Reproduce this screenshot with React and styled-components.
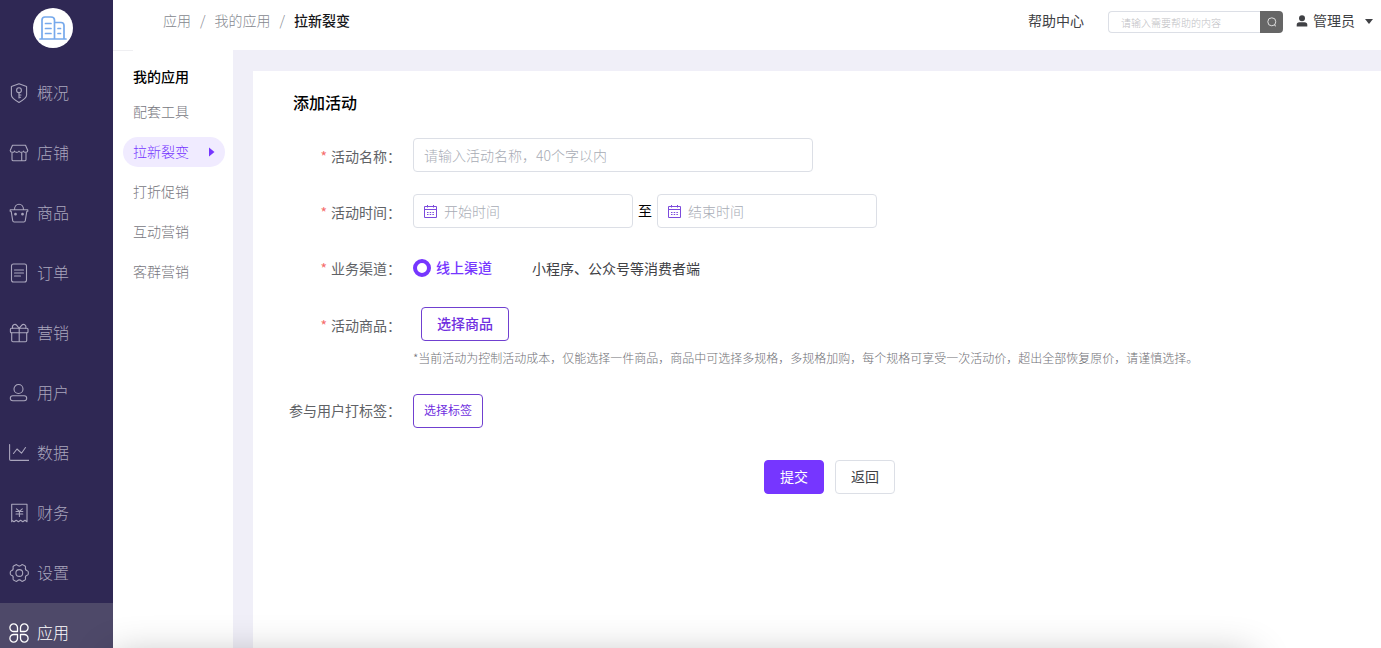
import React, { useState } from "react";
import styled, { createGlobalStyle } from "styled-components";

const GlobalStyle = createGlobalStyle`
    * {
        box-sizing: border-box;
    }

    body {
        margin: 0;
        background-color: #fff;
        color: #606266;
        font-family: "Noto Sans CJK SC", sans-serif;
        font-size: 14px;
        line-height: 20px;
    }

    button, input {
        font-family: inherit;
    }

    a {
        color: inherit;
        text-decoration: none;
    }
`;

const Layout = styled.div`
    display: flex;
    height: 100vh;
    overflow: hidden;
`;

/* 中文字形偏低，用下内边距与图标对齐 */
const Text = styled.span`
    padding-bottom: 2px;
`;

/* 左侧主导航 */
const Sidebar = styled.nav`
    flex: none;
    width: 113px;
    background-color: #2f2854;
`;

const Logo = styled.a`
    display: flex;
    align-items: center;
    justify-content: center;
    width: 40px;
    height: 40px;
    margin: 8px auto 15px 33px;
    border-radius: 50%;
    background-color: #fff;
`;

const NavItem = styled.a`
    display: flex;
    align-items: center;
    gap: 8px;
    height: 60px;
    padding-left: 9px;
    font-size: 16px;
    font-weight: 300;
    color: ${props => props.$active ? "#fff" : "#aaa6bd"};
    background-color: ${props => props.$active ? "#4e4969" : "transparent"};

    svg {
        flex: none;
    }
`;

const Page = styled.div`
    flex: 1;
    min-width: 0;
    display: flex;
    flex-direction: column;
`;

/* 顶部栏 */
const Header = styled.header`
    display: flex;
    justify-content: space-between;
    height: 50px;
    padding: 10px 8px 0 50px;
    background-color: #fff;
`;

const Breadcrumb = styled.nav`
    display: flex;
    gap: 9px;
    height: 20px;
    color: #85888f;
    font-weight: 300;
`;

const Current = styled.strong`
    font-weight: 500;
    color: #17171a;
`;

const Tools = styled.div`
    display: flex;
    align-items: center;
    height: 24px;
    color: #404145;
`;

const HelpLink = styled.a`
    margin-right: 24px;
    padding-bottom: 4px;
`;

const Search = styled.form`
    display: flex;
    width: 175px;
    height: 22px;
    margin-right: 13px;
`;

const SearchInput = styled.input`
    flex: 1;
    min-width: 0;
    padding: 0 12px;
    border: 1px solid #dcdfe6;
    border-right: 0;
    border-radius: 4px 0 0 4px;
    font-size: 10px;
    outline: none;

    &::placeholder {
        color: #c0c0c4;
        font-weight: 300;
    }
`;

const SearchButton = styled.button`
    display: flex;
    align-items: center;
    justify-content: center;
    width: 23px;
    padding: 0;
    border: 0;
    border-radius: 0 4px 4px 0;
    background-color: #666;
`;

const UserButton = styled.button`
    display: flex;
    align-items: center;
    gap: 5px;
    padding: 0 0 2px;
    border: 0;
    background: none;
    color: #404145;
    font-size: 14px;
    line-height: 20px;

    svg:last-child {
        margin-left: 5px;
    }
`;

const Body = styled.div`
    flex: 1;
    display: flex;
    min-height: 0;
    background-color: #f0eff8;
`;

/* 二级菜单 */
const SubMenu = styled.nav`
    flex: none;
    width: 120px;
    padding: 16px 8px 0 10px;
    background: #fff linear-gradient(#efeff2, #efeff2) no-repeat 0 0 / 20px 1px;
`;

const SubTitle = styled.h2`
    margin: 0 0 11px;
    padding-left: 10px;
    font-size: 14px;
    font-weight: 500;
    line-height: 20px;
    color: #000;
`;

const SubItem = styled.a`
    display: flex;
    align-items: center;
    justify-content: space-between;
    height: 30px;
    margin-bottom: 10px;
    padding: 0 10px;
    border-radius: 15px;
    font-weight: 300;
    color: ${props => props.$active ? "#7636ff" : "#77777e"};
    background-color: ${props => props.$active ? "#f0ebff" : "transparent"};
`;

const Card = styled.main`
    flex: 1;
    min-width: 0;
    margin: 21px 0 0 20px;
    padding: 21px 40px;
    background-color: #fff;
`;

const Title = styled.h1`
    margin: 0 0 25px;
    font-size: 16px;
    font-weight: 500;
    line-height: 21px;
    color: #000;
`;

/* 表单 */
const Form = styled.form`
    display: flex;
    flex-direction: column;
    gap: 22px;
`;

const FormItem = styled.div`
    display: flex;
    align-items: flex-start;
`;

const Label = styled.label`
    flex: none;
    width: 112px;
    margin: 0 12px 0 -4px;
    padding-top: ${props => props.$top || 8}px;
    text-align: right;
    white-space: nowrap;
    color: #606266;
`;

const Required = styled.span`
    margin-right: 4px;
    color: #f56c6c;
`;

const Content = styled.div`
    display: flex;
    flex-wrap: wrap;
    align-items: center;
    min-height: 34px;
`;

const RadioRow = styled(Content)`
    padding-top: 1px;
`;

const InputBox = styled.span`
    display: flex;
    align-items: center;
    gap: 7px;
    width: ${props => props.$width}px;
    height: 34px;
    padding: 0 10px;
    border: 1px solid #dcdfe6;
    border-radius: 4px;
    background-color: #fff;
`;

const Input = styled.input`
    flex: 1;
    min-width: 0;
    padding: 0;
    border: 0;
    outline: none;
    font-size: 14px;
    line-height: 20px;
    color: #606266;

    &::placeholder {
        color: #a8acb5;
        font-weight: 300;
    }
`;

const To = styled.span`
    padding: 0 5px 2px;
    color: #000;
`;

const RadioLabel = styled.label`
    display: flex;
    align-items: center;
    gap: 5px;
    margin-right: 40px;
    font-weight: 500;
    color: #7636ff;
`;

const Radio = styled.input`
    appearance: none;
    width: 18px;
    height: 18px;
    margin: 0;
    border: 4px solid #7636ff;
    border-radius: 50%;
    background-color: #fff;
`;

const Desc = styled.span`
    color: #404145;
`;

const Button = styled.button`
    height: 34px;
    padding: 0 ${props => props.$small ? 10 : 16}px 2px;
    border: 1px solid ${props => props.$primary ? "#7636ff" : props.$plain ? "#dcdfe6" : "#7040d0"};
    border-radius: 4px;
    background-color: ${props => props.$primary ? "#7636ff" : "#fff"};
    color: ${props => props.$primary ? "#fff" : props.$plain ? "#404145" : "#7030e0"};
    font-size: ${props => props.$small ? 12 : 14}px;
    font-weight: ${props => props.$small ? 400 : 500};
    line-height: 20px;
`;

const Goods = styled.div`
    padding-top: 1px;

    ${Button} {
        display: block;
        margin-left: 8px;
        padding: 0 15px 2px;
    }
`;

const Hint = styled.p`
    margin: 7px 0 4px;
    font-size: 12px;
    font-weight: 300;
    line-height: 20px;
    color: #707076;
`;

const Actions = styled.div`
    display: flex;
    justify-content: center;
    gap: 11px;
    padding-top: 10px;
    padding-left: 25px;

    ${Button} {
        padding: 0 15px 2px;
        font-weight: 400;
    }
`;

/* 底部浮层投影 */
const BottomShade = styled.div`
    position: fixed;
    top: calc(100% + 10px);
    left: 113px;
    right: 130px;
    height: 60px;
    box-shadow: 0 0 40px rgba(0, 0, 0, 0.3);
    pointer-events: none;
`;

const Icon = ({ children, size = 20, ...rest }) => (
    <svg
        width={size}
        height={size}
        viewBox="0 0 20 20"
        fill="none"
        stroke="currentColor"
        strokeWidth="1.1"
        strokeLinecap="round"
        strokeLinejoin="round"
        aria-hidden="true"
        {...rest}
    >
        {children}
    </svg>
);

const navItems = [
    {
        name: "概况",
        icon: (
            <>
                <path d="M10 .8 17.6 3.4V12c0 3-3 5-7.600 7.400C5.400 17 2.400 15 2.400 12V3.400Z" />
                <circle cx="10" cy="7.200" r="2.400" />
                <path d="M10 9.600V15M10 12h2M10 14.300h1.600" />
            </>
        )
    },
    {
        name: "店铺",
        icon: (
            <>
                <path d="M3.500 2.200H16.500L18.800 7.500C18.800 9.800 14.500 9.800 14.400 8 14 9.800 10.400 9.800 10 8 9.600 9.800 6 9.800 5.600 8 5.500 9.800 1.200 9.800 1.200 7.500Z" />
                <path d="M3 9.800V16.500q0 1.300 1.300 1.300H15.700q1.300 0 1.300-1.300V9.800M12.700 10v7.800" />
            </>
        )
    },
    {
        name: "商品",
        icon: (
            <>
                <path d="M1.200 8.300V6.800h17.600v1.500M2.200 8.300 3.700 17.700q.2 1.300 1.500 1.300H14.800q1.300 0 1.500-1.300L17.800 8.300M5.500 6.500C5.500-.6 14.500-.6 14.500 6.500" />
                <circle cx="6.500" cy="11.200" r=".8" fill="currentColor" />
                <circle cx="13.500" cy="11.200" r=".8" fill="currentColor" />
            </>
        )
    },
    {
        name: "订单",
        icon: (
            <>
                <rect x="2.500" y="1" width="15" height="18" rx="2" />
                <path d="M5.500 7h9M5.500 10h9M5.500 13h6" />
            </>
        )
    },
    {
        name: "营销",
        icon: (
            <>
                <rect x="1.400" y="5.300" width="17.600" height="4.500" rx="1" />
                <path d="M2.700 9.800V17.500q0 1.200 1.200 1.200H16.500q1.200 0 1.200-1.200V9.800M10.200 5.300V18.700M10.200 5.300 7.800 2.400C6 .3 2.600 2 3.600 5.300M10.200 5.300 12.600 2.400C14.400 .3 17.800 2 16.800 5.300" />
            </>
        )
    },
    {
        name: "用户",
        icon: (
            <>
                <circle cx="9.500" cy="6" r="4.500" />
                <rect x="1.300" y="12.700" width="16.400" height="5" rx="2.500" />
            </>
        )
    },
    {
        name: "数据",
        icon: <path d="M.6 1.500V16.200q0 1.200 1.200 1.200H20M4.500 10.500 8 6l4.500 4.200L16.500 4.500" />
    },
    {
        name: "财务",
        icon: (
            <>
                <path d="M2.700 18.800V1.200H18V18.800L16 17.200 13.800 18.800 11.600 17.200 9.400 18.800 7.200 17.200 5 18.800 2.700 17.200" />
                <path d="M7.500 5.800 10.400 8.300 13.300 5.800M7 8.500h6.800M7 11h6.800M10.400 8.500V13.500" />
            </>
        )
    },
    {
        name: "设置",
        icon: (
            <>
                <path d="M6.500 1.900Q7.500 1.300 8.300 2.200 10.300 4 12.300 2.200 13.100 1.300 14.100 1.900L16 3Q16.900 3.600 16.500 4.700 15.900 7.200 18.200 7.800 19.300 8.100 19.300 9V11Q19.300 11.900 18.200 12.200 15.900 12.800 16.500 15.300 16.900 16.400 16 17L14.100 18.100Q13.100 18.700 12.300 17.800 10.300 16 8.300 17.800 7.500 18.700 6.500 18.100L4.600 17Q3.700 16.400 4.100 15.300 4.700 12.800 2.400 12.200 1.300 11.900 1.300 11V9Q1.300 8.100 2.400 7.800 4.700 7.200 4.100 4.700 3.700 3.600 4.600 3Z" />
                <circle cx="10.300" cy="10" r="3.400" />
            </>
        )
    },
    {
        name: "应用",
        active: true,
        icon: (
            <path
                strokeWidth="1.300"
                d="M8.500 8.500H4.800A3.800 3.800 0 1 1 8.500 4.700ZM11.500 8.500V4.700A3.800 3.800 0 1 1 15.200 8.500ZM8.500 11.500V15.300A3.800 3.800 0 1 1 4.800 11.500ZM11.500 11.500H15.200A3.800 3.800 0 1 1 11.500 15.300Z"
            />
        )
    }
];

const subItems = ["配套工具", "拉新裂变", "打折促销", "互动营销", "客群营销"];

const LogoIcon = () => (
    <svg width="28" height="26" viewBox="0 0 28 26" fill="none" stroke="#76a9ec" strokeWidth="1.700" strokeLinecap="round" aria-hidden="true">
        <path d="M1 24H27M3 24V5Q3 2 6 2H12Q15.500 2 15.500 5V24M15.500 7.500H22Q25 7.500 25 10.500V24M6.500 8.500h5.500M6.500 13.500h5.500M6.500 18.500h5.500M19 13.500h2.500M19 18.500h2.500" />
    </svg>
);

const CalendarIcon = () => (
    <svg width="13" height="13" viewBox="0 0 13 13" fill="none" stroke="#7c4bdc" aria-hidden="true">
        <path d="M.5 1.500H12.500V12.500H.5ZM.5 4.500H12.500M3.500 0V2.500M9.500 0V2.500" />
        <path d="M3 7.500H10M3 9.500H10" strokeDasharray="1.500 1.200" />
    </svg>
);

const DateInput = ({ label }) => (
    <InputBox $width={220}>
        <CalendarIcon />
        <Input type="text" placeholder={label} aria-label={label} />
    </InputBox>
);

const App = () => {
    const [current, setCurrent] = useState("拉新裂变");

    return (
        <>
            <GlobalStyle />
            <Layout>
                <Sidebar>
                    <Logo href="#" aria-label="首页">
                        <LogoIcon />
                    </Logo>
                    {navItems.map(item => (
                        <NavItem key={item.name} href="#" $active={item.active}>
                            <Icon>{item.icon}</Icon>
                            <Text>{item.name}</Text>
                        </NavItem>
                    ))}
                </Sidebar>

                <Page>
                    <Header>
                        <Breadcrumb>
                            <a href="#">应用</a>
                            <span>/</span>
                            <a href="#">我的应用</a>
                            <span>/</span>
                            <Current>拉新裂变</Current>
                        </Breadcrumb>
                        <Tools>
                            <HelpLink href="#">帮助中心</HelpLink>
                            <Search onSubmit={e => e.preventDefault()}>
                                <SearchInput type="text" placeholder="请输入需要帮助的内容" aria-label="帮助搜索" />
                                <SearchButton aria-label="搜索">
                                    <svg width="10" height="10" viewBox="0 0 10 10" fill="none" stroke="#ddd" aria-hidden="true">
                                        <circle cx="4.800" cy="4.800" r="4" />
                                        <path d="M7 7.500 9 9.300" />
                                    </svg>
                                </SearchButton>
                            </Search>
                            <UserButton type="button">
                                <svg width="12" height="12" viewBox="0 0 12 12" fill="currentColor" aria-hidden="true">
                                    <circle cx="6" cy="3.300" r="3" />
                                    <path d="M.7 11.500V10Q.7 7.300 3.500 7.300H8.500Q11.300 7.300 11.300 10V11.500Z" />
                                </svg>
                                <Text>管理员</Text>
                                <svg width="8" height="5" viewBox="0 0 8 5" fill="currentColor" aria-hidden="true">
                                    <path d="M0 0H8L4 5Z" />
                                </svg>
                            </UserButton>
                        </Tools>
                    </Header>

                    <Body>
                        <SubMenu>
                            <SubTitle>我的应用</SubTitle>
                            {subItems.map(name => (
                                <SubItem
                                    key={name}
                                    href="#"
                                    $active={name === current}
                                    onClick={() => setCurrent(name)}
                                >
                                    <Text>{name}</Text>
                                    {name === current && (
                                        <svg width="6" height="10" viewBox="0 0 6 10" fill="currentColor" aria-hidden="true">
                                            <path d="M0 .5 5.500 5 0 9.500Z" />
                                        </svg>
                                    )}
                                </SubItem>
                            ))}
                        </SubMenu>

                        <Card>
                            <Title>添加活动</Title>
                            <Form onSubmit={e => e.preventDefault()}>
                                <FormItem>
                                    <Label htmlFor="name"><Required>*</Required>活动名称：</Label>
                                    <Content>
                                        <InputBox $width={400}>
                                            <Input id="name" type="text" placeholder="请输入活动名称，40个字以内" />
                                        </InputBox>
                                    </Content>
                                </FormItem>

                                <FormItem>
                                    <Label as="span"><Required>*</Required>活动时间：</Label>
                                    <Content>
                                        <DateInput label="开始时间" />
                                        <To>至</To>
                                        <DateInput label="结束时间" />
                                    </Content>
                                </FormItem>

                                <FormItem>
                                    <Label as="span"><Required>*</Required>业务渠道：</Label>
                                    <RadioRow>
                                        <RadioLabel>
                                            <Radio type="radio" name="channel" defaultChecked />
                                            <Text>线上渠道</Text>
                                        </RadioLabel>
                                        <Desc>小程序、公众号等消费者端</Desc>
                                    </RadioRow>
                                </FormItem>

                                <FormItem>
                                    <Label as="span" $top={9}><Required>*</Required>活动商品：</Label>
                                    <Goods>
                                        <Button type="button">选择商品</Button>
                                        <Hint>*当前活动为控制活动成本，仅能选择一件商品，商品中可选择多规格，多规格加购，每个规格可享受一次活动价，超出全部恢复原价，请谨慎选择。</Hint>
                                    </Goods>
                                </FormItem>

                                <FormItem>
                                    <Label as="span" $top={6}>参与用户打标签：</Label>
                                    <Content>
                                        <Button type="button" $small>选择标签</Button>
                                    </Content>
                                </FormItem>

                                <Actions>
                                    <Button type="submit" $primary>提交</Button>
                                    <Button type="button" $plain>返回</Button>
                                </Actions>
                            </Form>
                        </Card>
                    </Body>
                </Page>
            </Layout>
            <BottomShade />
        </>
    );
};

export default App;
